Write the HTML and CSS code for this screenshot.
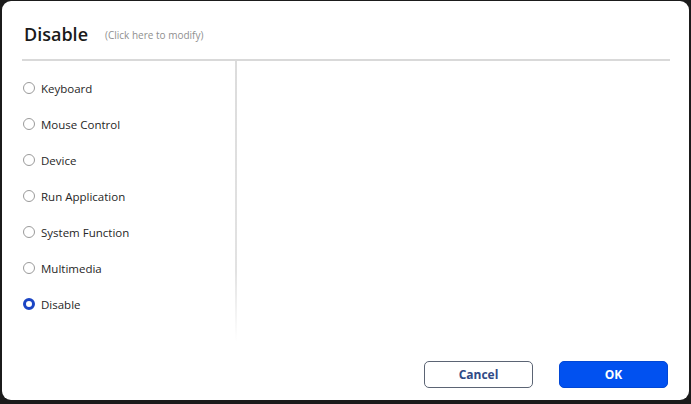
FILE: index.html
```html
<!DOCTYPE html>
<html lang="en">
<head>
<meta charset="utf-8">
<title>Disable</title>
<link rel="stylesheet" href="styles.css">
</head>
<body>
<div class="dialog">
  <header class="head">
    <h1 class="title">Disable</h1>
    <span class="hint">(Click here to modify)</span>
  </header>
  <div class="rule"></div>
  <div class="body">
    <ul class="options">
      <li class="option"><span class="radio"></span><span class="label">Keyboard</span></li>
      <li class="option"><span class="radio"></span><span class="label">Mouse Control</span></li>
      <li class="option"><span class="radio"></span><span class="label">Device</span></li>
      <li class="option"><span class="radio"></span><span class="label">Run Application</span></li>
      <li class="option"><span class="radio"></span><span class="label">System Function</span></li>
      <li class="option"><span class="radio"></span><span class="label">Multimedia</span></li>
      <li class="option selected"><span class="radio"></span><span class="label">Disable</span></li>
    </ul>
    <div class="separator"></div>
    <div class="panel"></div>
  </div>
  <footer class="actions">
    <button class="btn btn-cancel">Cancel</button>
    <button class="btn btn-ok">OK</button>
  </footer>
</div>
</body>
</html>
```

FILE: styles.css
```css
* { box-sizing: border-box; }
html, body { margin: 0; padding: 0; }
body {
  width: 691px;
  height: 404px;
  background: #1b1b1b;
  padding: 1px 2px 4px 2px;
  font-family: "Open Sans", "Noto Sans", sans-serif;
  overflow: hidden;
}
.dialog {
  width: 687px;
  height: 399px;
  background: #fff;
  border-radius: 9px;
  display: flex;
  flex-direction: column;
}
.head {
  height: 58px;
  padding: 7px 0 0 22px;
  display: flex;
  align-items: center;
}
.title {
  margin: 0;
  font-size: 18px;
  font-weight: 600;
  color: #1a1a1a;
}
.hint {
  margin-left: 17px;
  font-size: 10px;
  color: #8f8f8f;
  padding-top: 2px;
}
.rule {
  margin: 0 19px 0 20px;
  height: 2px;
  background: #d9d9d9;
}
.body {
  height: 280px;
  display: flex;
}
.options {
  list-style: none;
  margin: 0;
  padding: 9px 0 0 21px;
  width: 233px;
}
.option {
  height: 36px;
  display: flex;
  align-items: center;
}
.radio {
  width: 12px;
  height: 12px;
  border-radius: 50%;
  border: 1.5px solid #9a9a9a;
  background: #fff;
  flex: none;
}
.selected .radio {
  border: 3.5px solid #1b45c4;
}
.label {
  margin-left: 6px;
  font-size: 11.5px;
  color: #262626;
}
.separator {
  width: 2px;
  background: linear-gradient(#dcdcdc 0%, #e2e2e2 75%, rgba(240,240,240,0) 100%);
}
.panel { flex: 1; }
.actions {
  display: flex;
  justify-content: flex-end;
  gap: 26px;
  padding: 20px 21px 0 0;
}
.btn {
  width: 109px;
  height: 27px;
  border-radius: 5px;
  font-family: "Open Sans", "Noto Sans", sans-serif;
  font-size: 12px;
  font-weight: 700;
  cursor: pointer;
}
.btn-cancel {
  background: #fff;
  border: 1px solid #5b6474;
  color: #2f4a86;
}
.btn-ok {
  background: #0151f0;
  border: 1px solid #0147d6;
  color: #fff;
}
```
